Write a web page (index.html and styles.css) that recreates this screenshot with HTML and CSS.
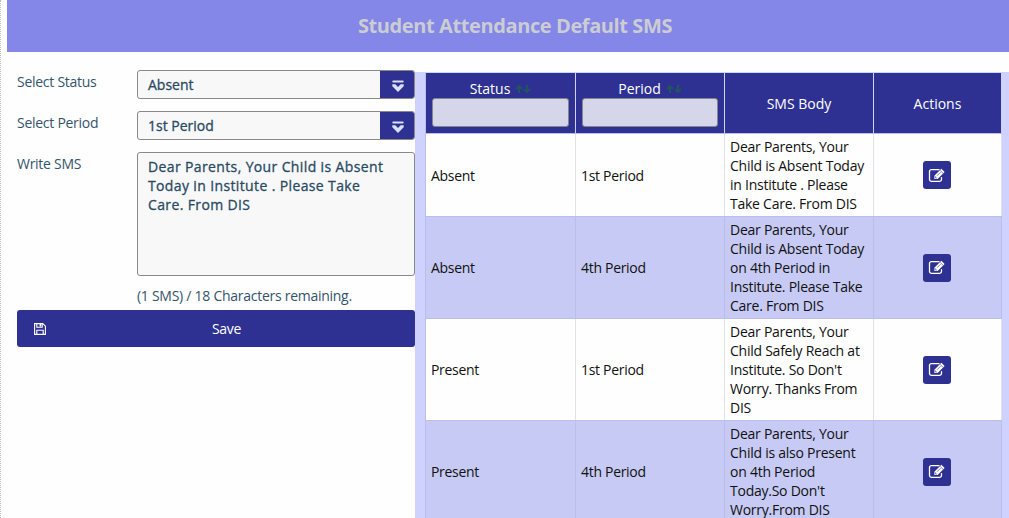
FILE: index.html
```html
<!DOCTYPE html>
<html lang="en">
<head>
<meta charset="utf-8">
<title>Student Attendance Default SMS</title>
<link rel="stylesheet" href="styles.css">
</head>
<body>
<svg class="defs" width="0" height="0">
  <symbol id="edit" viewBox="0 0 18 15">
    <path d="M11 1.700H3.300A1.800 1.800 0 0 0 1.500 3.500V11.500a1.800 1.800 0 0 0 1.800 1.800h8.400a1.800 1.800 0 0 0 1.800-1.800V9.600" fill="none" stroke="currentColor" stroke-width="1.300" stroke-linecap="round"/>
    <path d="M6.400 7.800 13.400.8 16.600 4 9.600 11H6.400Z" fill="currentColor"/>
    <path d="M7.400 8.300v1.700h1.700M12.200 2.400l2.800 2.800M9 7.800l3.600-3.600" fill="none" stroke="#2e3192" stroke-width=".6"/>
  </symbol>
  <symbol id="down" viewBox="0 0 12 12">
    <path d="M1.300 1.500h9.400" fill="none" stroke="currentColor" stroke-width="2" stroke-linecap="round"/>
    <path d="M.3 4.300h3L6 7l2.700-2.700h3v2L6 12 .3 6.300Z" fill="currentColor"/>
  </symbol>
  <symbol id="sort" viewBox="0 0 16 10">
    <path d="M4 9V2M1 5 4 2l3 3M12 1v7M9 5l3 3 3-3" fill="none" stroke="currentColor" stroke-width="2"/>
  </symbol>
</svg>
<div class="page">
  <header class="title">Student Attendance Default SMS</header>
  <main class="content">
    <section class="form">
      <div class="field">
        <span class="label">Select Status</span>
        <div class="select"><span class="value">Absent</span><span class="trigger"><svg width="12" height="12"><use href="#down"/></svg></span></div>
      </div>
      <div class="field">
        <span class="label">Select Period</span>
        <div class="select"><span class="value">1st Period</span><span class="trigger"><svg width="12" height="12"><use href="#down"/></svg></span></div>
      </div>
      <div class="field message">
        <span class="label">Write SMS</span>
        <div class="textarea">Dear Parents, Your Child is Absent<br>Today in Institute . Please Take<br>Care. From DIS</div>
      </div>
      <div class="counter">(1 SMS) / 18 Characters remaining.</div>
      <div class="save">
        <svg class="disk" width="12" height="12" viewBox="0 0 12 12"><path d="M.6.6h8.200l2.600 2.600v8.200H.6ZM2.800.6v3.700h5.400V.6M2.800 11.400V7.200h6.400v4.200" fill="none" stroke="currentColor" stroke-width="1.100"/><path d="M5.600 1h1.600v2.500H5.600Z" fill="currentColor"/></svg>
        <span>Save</span>
      </div>
    </section>
    <section class="panel">
      <div class="table">
        <div class="row head">
          <div class="cell"><div class="heading">Status <svg width="16" height="10"><use href="#sort"/></svg></div><div class="filter"></div></div>
          <div class="cell"><div class="heading">Period <svg width="16" height="10"><use href="#sort"/></svg></div><div class="filter"></div></div>
          <div class="cell">SMS Body</div>
          <div class="cell">Actions</div>
        </div>
        <div class="row">
          <div class="cell">Absent</div>
          <div class="cell">1st Period</div>
          <div class="cell">Dear Parents, Your<br>Child is Absent Today<br>in Institute . Please<br>Take Care. From DIS</div>
          <div class="cell action"><span class="edit"><svg width="18" height="15"><use href="#edit"/></svg></span></div>
        </div>
        <div class="row even">
          <div class="cell">Absent</div>
          <div class="cell">4th Period</div>
          <div class="cell">Dear Parents, Your<br>Child is Absent Today<br>on 4th Period in<br>Institute. Please Take<br>Care. From DIS</div>
          <div class="cell action"><span class="edit"><svg width="18" height="15"><use href="#edit"/></svg></span></div>
        </div>
        <div class="row">
          <div class="cell">Present</div>
          <div class="cell">1st Period</div>
          <div class="cell">Dear Parents, Your<br>Child Safely Reach at<br>Institute. So Don't<br>Worry. Thanks From<br>DIS</div>
          <div class="cell action"><span class="edit"><svg width="18" height="15"><use href="#edit"/></svg></span></div>
        </div>
        <div class="row even">
          <div class="cell">Present</div>
          <div class="cell">4th Period</div>
          <div class="cell">Dear Parents, Your<br>Child is also Present<br>on 4th Period<br>Today.So Don't<br>Worry.From DIS</div>
          <div class="cell action"><span class="edit"><svg width="18" height="15"><use href="#edit"/></svg></span></div>
        </div>
      </div>
    </section>
  </main>
</div>
</body>
</html>
```
FILE: styles.css
```css
* { box-sizing: border-box; }
body {
  margin: 0;
  height: 518px;
  overflow: hidden;
  background: #fefefe;
  font: 14px/19px "Open Sans", sans-serif;
  color: #34546b;
}
svg { display: block; flex: none; }
.defs { position: absolute; }
.page { height: 518px; padding-left: 6px; border-left: 1px dotted #bbb; }
.title {
  height: 52px;
  background: #8486e8;
  color: #cccdd2;
  font-size: 20px;
  font-weight: 700;
  letter-spacing: -0.4px;
  line-height: 52px;
  text-align: center;
  padding-left: 14px;
  white-space: nowrap;
}
.content { display: grid; grid-template-columns: 408px 1fr; height: 466px; }
.form { padding: 18px 0 0 10px; letter-spacing: -0.27px; }
.field { display: grid; grid-template-columns: 120px 278px; margin-bottom: 12px; }
.label { padding-top: 2px; }
.select {
  display: flex;
  height: 29px;
  border: 1px solid #898989;
  border-radius: 3px;
  background: #f8f8f8;
  overflow: hidden;
}
.value {
  flex: 1;
  padding: 4px 10px;
  color: #294a64;
  font-weight: 500;
  -webkit-text-stroke: 0.3px #294a64;
  letter-spacing: 0;
}
.trigger {
  display: flex;
  align-items: center;
  justify-content: center;
  width: 34px;
  padding-left: 2px;
  padding-top: 2px;
  background: #2e3192;
  color: #d8e0fa;
}
.message { margin-bottom: 0; }
.textarea {
  height: 124px;
  padding: 4px 10px;
  border: 1px solid #898989;
  border-radius: 3px;
  background: #f8f8f8;
  color: #294a64;
  font-weight: 500;
  -webkit-text-stroke: 0.3px #294a64;
  letter-spacing: 0.37px;
  white-space: nowrap;
}
.counter { padding: 10px 0 5px 120px; }
.save {
  display: grid;
  grid-template-columns: 26px 1fr;
  align-items: center;
  height: 37px;
  padding: 0 22px 0 17px;
  border-radius: 3px;
  background: #2e3192;
  color: #fff;
  text-align: center;
}
.panel { margin-top: 20px; padding: 1px 0 0 10px; background: #cfd1fe; overflow: hidden; }
.table { width: 577px; color: #111; letter-spacing: -0.25px; white-space: nowrap; }
.row {
  display: grid;
  grid-template-columns: 151px 149px 149px 128px;
  background: #fefefe;
  border-bottom: 1px solid #b9bfeb;
}
.even { background: #c6caf5; }
.cell {
  display: flex;
  align-items: center;
  padding: 3px 5px;
  border-right: 1px solid #dfe1ed;
}
.cell:nth-child(-n+2) { letter-spacing: -0.3px; }
.cell:first-child { border-left: 1px solid #b9bfeb; }
.even .cell { border-right-color: #b9bfeb; }
.head { height: 61px; background: #2e3192; color: #fff; letter-spacing: 0; }
.head .cell { flex-direction: column; justify-content: center; padding: 0 6px; border-right-color: #cfd1fe; letter-spacing: 0; }
.head .cell:first-child { border-left-color: #b9bfeb; }
.heading { display: flex; align-items: center; gap: 5px; }
.heading svg { color: #21545e; }
.filter {
  width: 100%;
  height: 29px;
  border: 1px solid #85858f;
  border-radius: 3px;
  background: #d5d6e9;
}
.cell.action { justify-content: center; padding-right: 7px; }
.edit {
  display: flex;
  align-items: center;
  justify-content: center;
  width: 28px;
  height: 28px;
  border-radius: 3px;
  background: #2e3192;
  color: #fff;
}
```
